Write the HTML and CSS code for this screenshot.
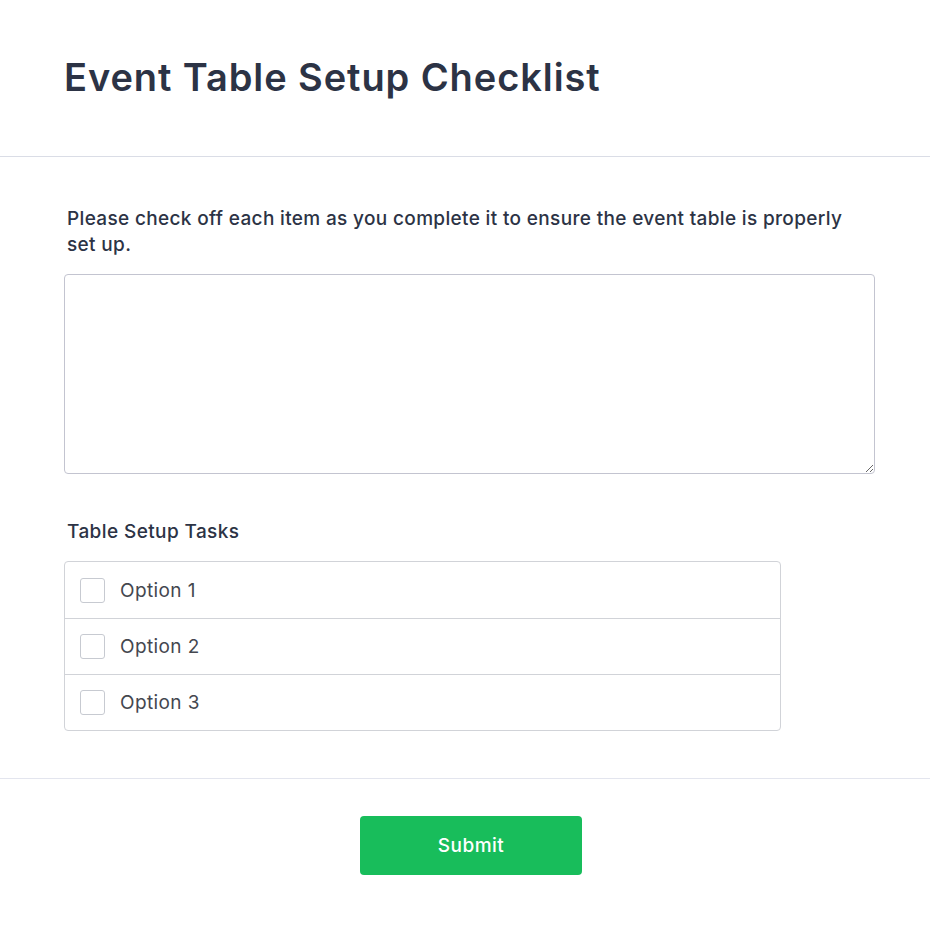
FILE: index.html
```html
<!DOCTYPE html>
<html lang="en">
<head>
<meta charset="utf-8">
<title>Event Table Setup Checklist</title>
<link rel="stylesheet" href="styles.css">
</head>
<body>
<form class="form">
  <header class="form-header">
    <h1 class="title">Event Table Setup Checklist</h1>
  </header>
  <section class="form-body">
    <label class="desc" for="notes">Please check off each item as you complete it to ensure the event table is properly set up.</label>
    <textarea id="notes" class="notes"></textarea>
    <div class="group-label">Table Setup Tasks</div>
    <div class="options">
      <label class="option"><span class="box"></span><span class="option-text">Option 1</span></label>
      <label class="option"><span class="box"></span><span class="option-text">Option 2</span></label>
      <label class="option"><span class="box"></span><span class="option-text">Option 3</span></label>
    </div>
  </section>
  <footer class="form-footer">
    <button type="button" class="submit">Submit</button>
  </footer>
</form>
</body>
</html>
```
FILE: styles.css
```css
* { box-sizing: border-box; }
html, body { margin: 0; padding: 0; background: #fff; }
body {
  font-family: Inter, "Noto Sans", sans-serif;
  color: #2c3345;
  letter-spacing: 0.025em;
}
.form-header {
  padding: 53px 64px 0;
  height: 157px;
  border-bottom: 1px solid #dadde6;
}
.title {
  margin: 0;
  font-size: 38px;
  font-weight: 600;
  line-height: 48px;
  color: #2c3345;
  letter-spacing: 0.024em;
}
.form-body {
  padding: 49px 55px 47px 64px;
  display: flex;
  flex-direction: column;
  border-bottom: 1px solid #e3e5ee;
}
.desc {
  display: block;
  padding-left: 3px;
  font-size: 19px;
  font-weight: 500;
  line-height: 26px;
  color: #2c3345;
  letter-spacing: 0.018em;
}
.notes {
  display: block;
  margin-top: 16px;
  width: 811px;
  height: 200px;
  border: 1px solid #c3c4d0;
  border-radius: 4px;
  font-family: inherit;
  resize: vertical;
}
.group-label {
  margin-top: 45px;
  padding-left: 3px;
  font-size: 19px;
  font-weight: 500;
  line-height: 26px;
  color: #2c3345;
}
.options {
  margin-top: 16px;
  width: 717px;
  border: 1px solid #d1d3d8;
  border-radius: 4px;
}
.option {
  display: flex;
  align-items: center;
  gap: 15px;
  height: 56px;
  padding-left: 15px;
  border-top: 1px solid #d1d3d8;
}
.option:first-child { border-top: 0; }
.box {
  width: 25px;
  height: 25px;
  border: 1px solid #c7cad1;
  border-radius: 3px;
  background: #fff;
}
.option-text {
  font-size: 19px;
  color: #44474f;
}
.form-footer {
  display: flex;
  justify-content: center;
  padding: 37px 0 50px 12px;
}
.submit {
  width: 222px;
  height: 59px;
  border: 0;
  border-radius: 4px;
  background: #18bd5b;
  color: #fff;
  font-family: inherit;
  font-size: 19px;
  font-weight: 500;
  letter-spacing: 0.025em;
}
```
